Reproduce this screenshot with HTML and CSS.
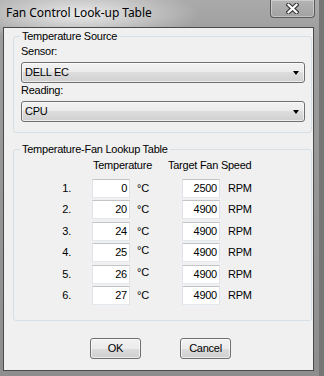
FILE: index.html
```html
<!DOCTYPE html>
<html>
<head>
<meta charset="utf-8">
<link rel="stylesheet" href="styles.css">
</head>
<body>
<div class="window">
  <div class="titlebar">
    <span class="title">Fan Control Look-up Table</span>
    <div class="close">
      <svg width="13" height="11" viewBox="0 0 13 11">
        <path d="M2.5 1.8 L10.5 9.2 M10.5 1.8 L2.5 9.2" stroke="#3a3a3a" stroke-width="4.4" stroke-linecap="square" fill="none"/>
        <path d="M2.5 1.8 L10.5 9.2 M10.5 1.8 L2.5 9.2" stroke="#ffffff" stroke-width="2.2" stroke-linecap="square" fill="none"/>
      </svg>
    </div>
  </div>
  <div class="client">
    <div class="group g1">
      <span class="legend">Temperature Source</span>
      <span class="lbl first">Sensor:</span>
      <div class="combo"><span>DELL EC</span><i class="arrow"></i></div>
      <span class="lbl">Reading:</span>
      <div class="combo"><span>CPU</span><i class="arrow"></i></div>
    </div>
    <div class="group g2">
      <span class="legend">Temperature-Fan Lookup Table</span>
      <div class="hdr"><span class="h1">Temperature</span><span>Target Fan Speed</span></div>
      <div class="rows">
        <div class="row"><span class="num">1.</span><span class="box">0</span><span class="unit">°C</span><span class="box">2500</span><span class="rpm">RPM</span></div>
        <div class="row"><span class="num">2.</span><span class="box">20</span><span class="unit">°C</span><span class="box">4900</span><span class="rpm">RPM</span></div>
        <div class="row"><span class="num">3.</span><span class="box">24</span><span class="unit">°C</span><span class="box">4900</span><span class="rpm">RPM</span></div>
        <div class="row"><span class="num">4.</span><span class="box">25</span><span class="unit up">°C</span><span class="box">4900</span><span class="rpm">RPM</span></div>
        <div class="row"><span class="num">5.</span><span class="box">26</span><span class="unit up">°C</span><span class="box">4900</span><span class="rpm">RPM</span></div>
        <div class="row"><span class="num">6.</span><span class="box">27</span><span class="unit">°C</span><span class="box">4900</span><span class="rpm">RPM</span></div>
      </div>
    </div>
    <div class="buttons">
      <div class="btn">OK</div>
      <div class="btn">Cancel</div>
    </div>
  </div>
</div>
</body>
</html>
```

FILE: styles.css
```css
html, body {
  margin: 0;
  padding: 0;
}
body {
  width: 324px;
  height: 376px;
  overflow: hidden;
  background: #8c8c8c;
}
.window {
  width: 324px;
  height: 376px;
  display: flex;
  flex-direction: column;
  background:
    radial-gradient(ellipse 120px 28px at 80px 14px, rgba(238,238,238,0.95), rgba(222,222,222,0.55) 55%, rgba(200,200,200,0) 100%),
    linear-gradient(to right, rgba(0,0,0,0) 319px, #767676 319px),
    linear-gradient(#aaaaaa, #9c9c9c 40px, #8e8e8e);
}
.titlebar {
  height: 27px;
  display: flex;
  align-items: flex-start;
}
.title {
  margin: 6px 0 0 6px;
  font-family: "Noto Sans", "Open Sans", sans-serif;
  font-size: 12px;
  line-height: 14px;
  letter-spacing: -0.05px;
  color: #000;
}
.close {
  margin-left: auto;
  margin-right: 9px;
  width: 43px;
  height: 17px;
  border: 1px solid #5a5a5a;
  border-top: none;
  border-radius: 0 0 4px 4px;
  background: linear-gradient(#b4b4b4, #a2a2a2);
  box-shadow: inset 0 0 0 1px rgba(255,255,255,0.35);
  display: flex;
  align-items: center;
  justify-content: center;
}
.close svg {
  display: block;
  margin-top: -1px;
}
.client {
  margin-left: 3px;
  width: 309px;
  height: 342px;
  border: 1px solid #4a4a4a;
  background: #f0f0f0;
  font-family: "Liberation Sans", Arial, sans-serif;
  font-size: 11px;
  line-height: 13px;
  letter-spacing: -0.25px;
  color: #000;
  display: flex;
  flex-direction: column;
  align-items: flex-start;
}
.group {
  box-sizing: border-box;
  margin-left: 9px;
  width: 299px;
  border: 1px solid #d5dfe5;
  border-radius: 3px;
  display: flex;
  flex-direction: column;
  align-items: flex-start;
}
.g1 {
  margin-top: 8px;
  height: 97px;
  padding: 0 6px 0 7px;
}
.g2 {
  margin-top: 16px;
  height: 172px;
}
.legend {
  margin: -7px 0 0 6px;
  padding: 0 2px;
  background: #f0f0f0;
  white-space: nowrap;
}
.g1 .legend {
  margin-left: -1px;
}
.lbl {
  margin-top: 1px;
}
.lbl.first {
  margin-top: 2px;
}
.combo {
  box-sizing: border-box;
  margin-top: 4px;
  width: 284px;
  height: 21px;
  border: 1px solid #707070;
  border-radius: 3px;
  background: linear-gradient(#f2f2f2 0%, #ebebeb 50%, #dddddd 50%, #cfcfcf 100%);
  box-shadow: inset 0 0 0 1px rgba(255,255,255,0.6);
  display: flex;
  align-items: center;
  padding: 0 5px 0 3px;
}
.combo span {
  flex: 1;
}
.arrow {
  width: 0;
  height: 0;
  border-left: 3.5px solid transparent;
  border-right: 3.5px solid transparent;
  border-top: 4px solid #000;
}
.hdr {
  margin-top: 3px;
  padding-left: 79px;
  display: flex;
  white-space: nowrap;
}
.h1 {
  width: 75px;
}
.rows {
  margin-top: 7px;
  display: flex;
  flex-direction: column;
  gap: 2.4px;
}
.row {
  height: 19px;
  display: flex;
  align-items: center;
  white-space: nowrap;
}
.num {
  width: 57px;
  text-align: right;
}
.box {
  box-sizing: border-box;
  margin-left: 21px;
  width: 38px;
  height: 19px;
  background: #fff;
  border: 1px solid;
  border-color: #c2c4c8 #dfe2e6 #e3e9ef #e2e3ea;
  text-align: right;
  padding: 2px 2px 0 0;
}
.unit {
  margin-left: 7px;
  width: 38px;
}
.unit.up {
  margin-bottom: 4px;
}
.unit + .box {
  margin-left: 7px;
}
.rpm {
  margin-left: 8px;
}
.buttons {
  margin-top: 17px;
  padding-left: 86px;
  display: flex;
  gap: 39px;
}
.btn {
  box-sizing: border-box;
  width: 51px;
  height: 21px;
  border: 1px solid #707070;
  border-radius: 3px;
  background: linear-gradient(#f2f2f2 0%, #ebebeb 50%, #dddddd 50%, #cfcfcf 100%);
  box-shadow: inset 0 0 0 1px rgba(255,255,255,0.6);
  display: flex;
  align-items: center;
  justify-content: center;
}
```
